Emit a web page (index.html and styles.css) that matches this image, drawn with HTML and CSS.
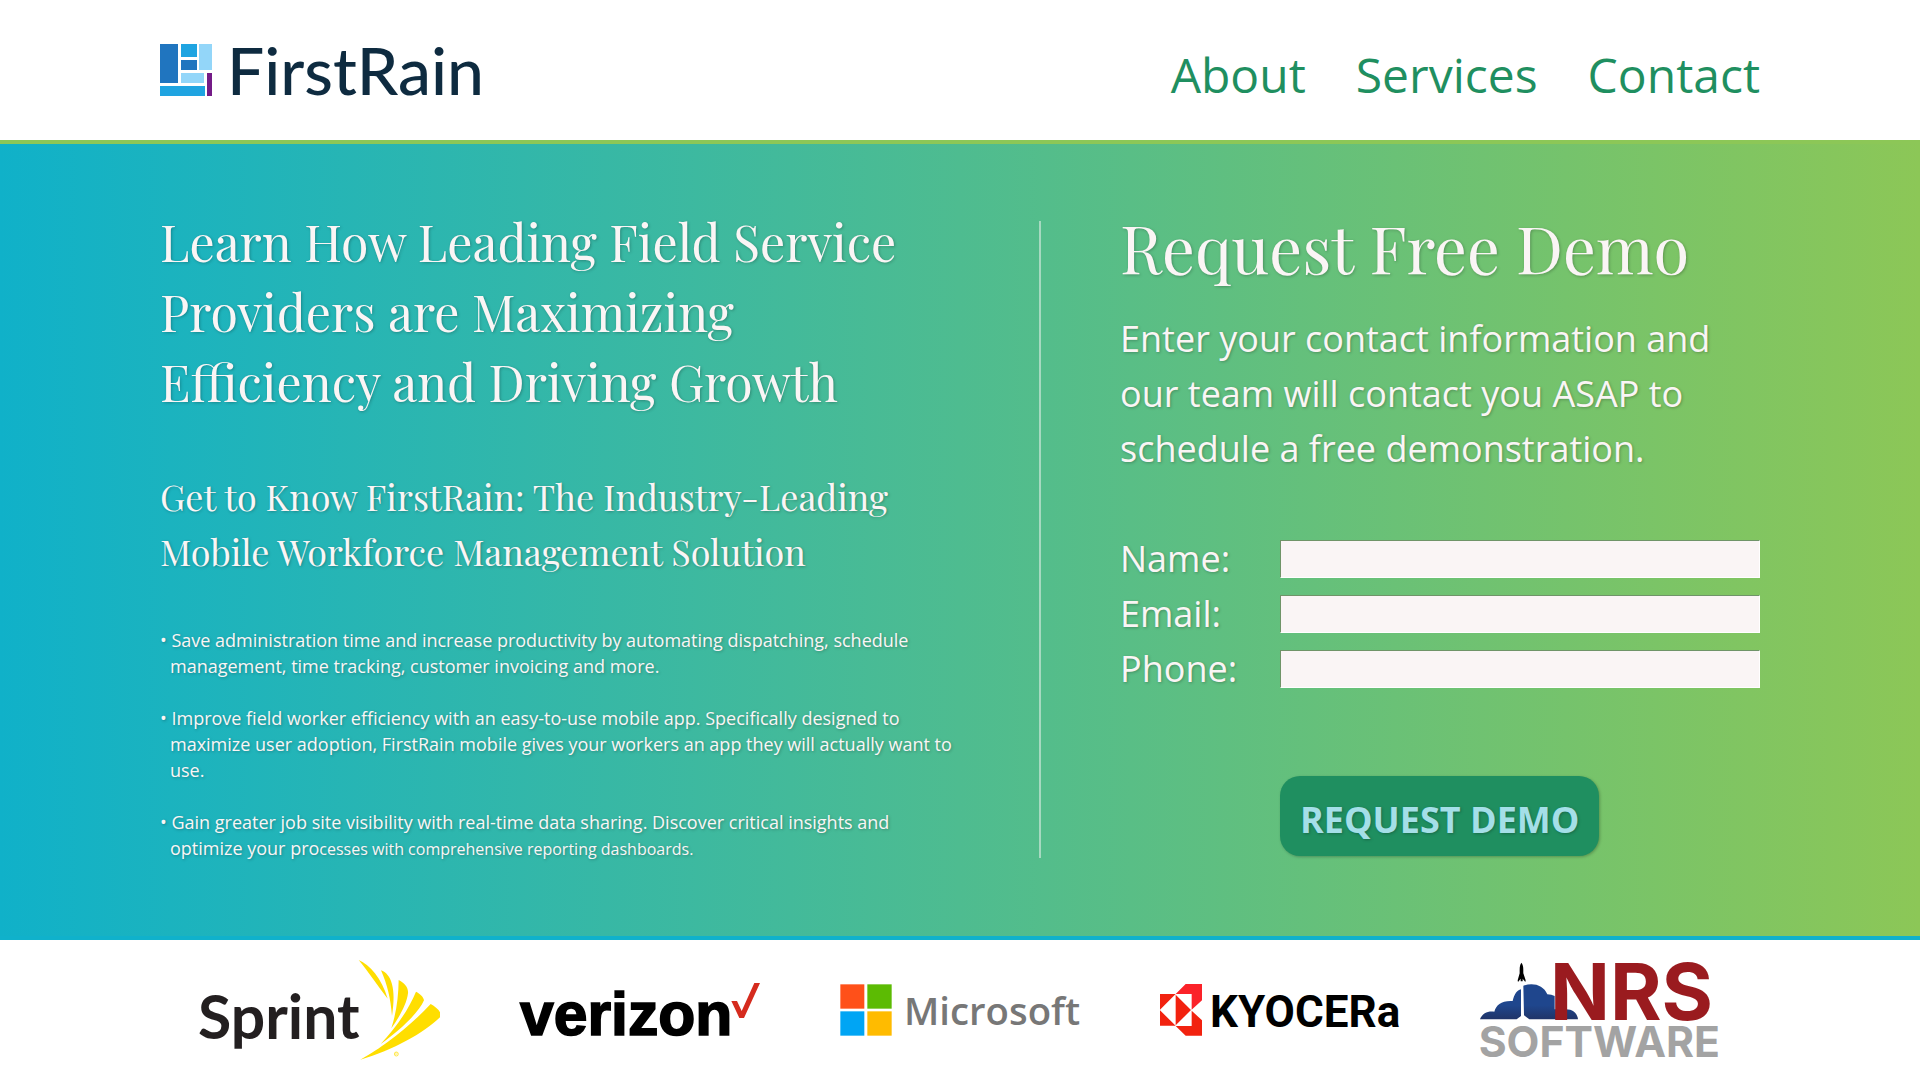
FILE: index.html
```html
<!DOCTYPE html>
<html lang="en">
<head>
<meta charset="utf-8">
<meta name="viewport" content="width=device-width, initial-scale=1">
<title>FirstRain</title>
<link rel="stylesheet" href="styles.css">
</head>
<body>
<header class="site-header">
  <a class="brand" href="#">
    <svg class="brand-mark" viewBox="0 0 53 52" aria-hidden="true">
      <path fill="#2075bf" d="M0 0h18v39H0zM21 16h16v10H21z"/>
      <path fill="#1fa4e1" d="M21 0h16v13H21zM0 42h45v10H0z"/>
      <path fill="#93d6f9" d="M39 0h13v26H39zM21 29h23v10H21z"/>
      <path fill="#741b87" d="M47 29h5v23h-5z"/>
    </svg>
    <span class="brand-name">FirstRain</span>
  </a>
  <nav class="site-nav">
    <a href="#">About</a>
    <a href="#">Services</a>
    <a href="#">Contact</a>
  </nav>
</header>

<main class="banner">
  <section class="pitch">
    <h1>Learn How Leading Field Service<br>Providers are Maximizing<br>Efficiency and Driving Growth</h1>
    <h2>Get to Know FirstRain: The Industry-Leading<br>Mobile Workforce Management Solution</h2>
    <ul class="benefits">
      <li>Save administration time and increase productivity by automating dispatching, schedule management, time tracking, customer invoicing and more.</li>
      <li>Improve field worker efficiency with an easy-to-use mobile app. Specifically designed to maximize user adoption, FirstRain mobile gives your workers an app they will actually want to use.</li>
      <li>Gain greater job site visibility with real-time data sharing. Discover critical insights and optimize your pro<span class="small">cesses with comprehensive reporting dashboards.</span></li>
    </ul>
  </section>
  <section class="demo">
    <h2>Request Free Demo</h2>
    <p>Enter your contact information and our team will contact you ASAP to schedule a free demonstration.</p>
    <form class="demo-form">
      <label for="name">Name:</label><input id="name" type="text">
      <label for="email">Email:</label><input id="email" type="email">
      <label for="phone">Phone:</label><input id="phone" type="tel">
      <button type="submit">REQUEST DEMO</button>
    </form>
  </section>
</main>

<footer class="clients">
  <svg viewBox="60 84 720 312" role="img" aria-label="Sprint">
    <text class="sprint" x="54" y="327">Sprint</text>
    <g fill="#ffde00">
      <path d="M536 90C570 105 605 145 623 206C595 170 565 125 536 90Z"/>
      <path d="M603 121C633 131 650 175 636 258C632 205 622 165 603 121Z"/>
      <path d="M656 150C672 158 686 172 684 190C680 225 655 265 634 295C650 245 655 200 656 150Z"/>
      <path d="M708 185C720 191 730 200 732 211C715 250 660 300 602 342C650 290 685 240 708 185Z"/>
      <path d="M752 222C764 229 776 238 780 247V262C730 310 640 360 541 389C575 370 600 353 622 337C670 302 715 262 752 222Z"/>
      <circle cx="649" cy="372" r="6" fill="none" stroke="#ffde00" stroke-width="2"/>
      <path d="M647 376v-8h3l2 2-2 2h-3m3 0 2 4" fill="none" stroke="#ffde00"/>
    </g>
  </svg>
  <svg viewBox="60 60 720 180" role="img" aria-label="Verizon">
    <text class="verizon" x="60" y="226">verizon</text>
    <path fill="#d52b1e" d="M694 123h17l14 30 38-84h17l-48 105h-14z"/>
  </svg>
  <svg viewBox="60 60 720 180" role="img" aria-label="Microsoft">
    <path fill="#ff5019" d="M61 73h72v73H61z"/>
    <path fill="#5cbb03" d="M142 73h73v73h-73z"/>
    <path fill="#00a5f4" d="M61 154h72v73H61z"/>
    <path fill="#ffbb00" d="M142 154h73v73h-73z"/>
    <text class="microsoft" x="252" y="195">Microsoft</text>
  </svg>
  <svg viewBox="60 60 720 180" role="img" aria-label="Kyocera">
    <path fill="#f2220f" d="M60 102h47L60 149ZM60 151l47 46H60ZM107 104l46 46-46 46ZM107 198h48v-46l31 29v46h-49Z"/>
    <path fill="#fb2229" d="M107 102l30-30h49v49l-31 28v-47Z"/>
    <text class="kyocera" x="210" y="200">KYOCERa</text>
  </svg>
  <svg viewBox="60 66 720 288" role="img" aria-label="NRS Software">
    <defs>
      <linearGradient id="smoke" x1="0" y1="0" x2="0" y2="1">
        <stop offset="0.6" stop-color="#1f468d"/>
        <stop offset="1" stop-color="#203468"/>
      </linearGradient>
    </defs>
    <path fill="url(#smoke)" d="M60 238C65 223 80 212 103 215C108 195 125 181 158 183C163 162 171 151 183 148V228L170 238ZM190 137C220 127 250 135 262 163Q275 163 284 168V208H313C335 206 352 218 354 238H208L192 226Z"/>
    <path d="M184 68C178 76 179 88 179 100L173 121L174 126L182 116V124H188V116L196 126L197 121L190 100C190 88 191 76 184 68Z"/>
    <text class="nrs" x="270" y="239">NRS</text>
    <text class="software" x="56" y="350">SOFTWARE</text>
  </svg>
</footer>
</body>
</html>
```
FILE: styles.css
```css
* {
  box-sizing: border-box;
}

body {
  margin: 0;
  min-height: 100vh;
  display: flex;
  flex-direction: column;
  background: #fff;
  font-family: "Open Sans", sans-serif;
}

h1,
h2,
p,
ul {
  margin: 0;
  padding: 0;
  font-weight: 400;
}

/* Header */
.site-header {
  display: flex;
  justify-content: space-between;
  align-items: center;
  min-height: 144px;
  padding: 0 calc(100% / 12);
  border-bottom: 4px solid #8cc757;
}

.brand {
  display: flex;
  align-items: center;
  gap: 14px;
  color: #0e2b40;
  text-decoration: none;
}

.brand-mark {
  width: 53px;
  height: 52px;
}

.brand-name {
  font-family: Lato, sans-serif;
  font-size: 66px;
  font-weight: 500;
  line-height: 72px;
}

.site-nav {
  display: flex;
  gap: 50px;
  padding-top: 10px;
}

.site-nav a {
  color: #1f8f60;
  font-size: 48px;
  line-height: 64px;
  text-decoration: none;
}

/* Banner */
.banner {
  flex: 1;
  display: grid;
  grid-template-columns: 5fr 4fr;
  gap: 160px;
  padding: 63px calc(100% / 12) 72px;
  border-bottom: 4px solid #10b1cb;
  background: linear-gradient(90deg, #10b1c9, #8cc757);
  color: #faf5f5;
  text-shadow: 1px 1px 3px rgba(0, 0, 0, 0.25);
}

.pitch {
  position: relative;
}

/* Rule between the two columns */
.pitch::after {
  content: "";
  position: absolute;
  top: 14px;
  bottom: 6px;
  right: -81px;
  width: 2px;
  background: rgba(250, 245, 245, 0.5);
}

h1,
h2 {
  font-family: "Playfair Display", "Liberation Serif", serif;
}

h1 {
  font-size: 50px;
  line-height: 70px;
}

.pitch h2 {
  margin-top: 52px;
  font-size: 36px;
  line-height: 55px;
}

.benefits {
  display: grid;
  gap: 26px;
  margin-top: 48px;
  list-style: none;
  font-size: 18px;
  line-height: 26px;
}

.benefits li {
  padding-left: 10px;
  text-indent: -10px;
}

.benefits li::before {
  content: "• ";
}

.small {
  font-size: 16px;
}

.demo h2 {
  font-size: 65px;
  line-height: 80px;
}

.demo p {
  margin-top: 24px;
  font-size: 36px;
  line-height: 55px;
}

.demo-form {
  display: grid;
  grid-template-columns: 1fr 3fr;
  align-items: center;
  margin-top: 55px;
  font-size: 36px;
  line-height: 55px;
}

.demo-form input {
  width: 100%;
  height: 38px;
  padding: 0 8px;
  border: 1px solid #fff;
  border-top-color: #6f9468;
  border-left-color: #6f9468;
  background: #faf5f5;
  font: 24px "Open Sans", sans-serif;
}

.demo-form button {
  grid-column: 2;
  justify-self: start;
  height: 80px;
  margin-top: 80px;
  padding: 6px 20px 0;
  border: 0;
  border-radius: 20px;
  background: #1f8f60;
  box-shadow: 1px 1px 3px rgba(0, 0, 0, 0.25);
  color: #a4dfe8;
  font: 700 36px "Open Sans", sans-serif;
  text-shadow: 1px 1px 3px rgba(0, 0, 0, 0.25);
}

/* Client logos */
.clients {
  display: grid;
  grid-template-columns: repeat(5, 1fr);
  place-items: center;
  min-height: 140px;
  padding: 0 calc(100% / 12);
}

.clients svg {
  width: 75%;
  overflow: visible;
}

.sprint {
  fill: #231f20;
  font: 700 182px Lato, sans-serif;
}

.verizon {
  font: 700 182px "Liberation Sans", sans-serif;
  stroke: #000;
  stroke-width: 5px;
}

.microsoft {
  fill: #777;
  font: 600 115px "Open Sans", sans-serif;
}

.kyocera {
  font: 700 132px Roboto, sans-serif;
}

.nrs {
  fill: #9a1b1f;
  font: 700 236px Inter, sans-serif;
}

.software {
  fill: #a3a3a3;
  font: 700 128px Inter, sans-serif;
}
```
